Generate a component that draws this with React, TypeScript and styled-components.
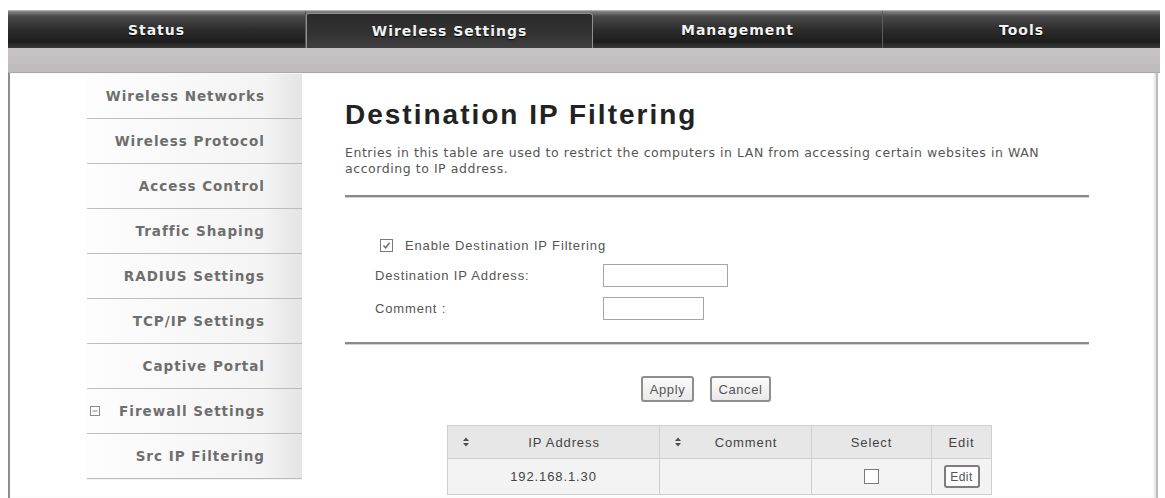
import React, { FC } from 'react';
import styled, { createGlobalStyle, css } from 'styled-components';

const GlobalStyle = createGlobalStyle`
    html, body {
        margin: 0;
        padding: 0;
        background: #ffffff;
    }
    body {
        font-family: 'Liberation Sans', Arial, sans-serif;
        overflow: hidden;
    }
`;

const Page = styled.div`
    width: 1165px;
    height: 498px;
    padding: 10px 0 0 8px;
    box-sizing: border-box;
    display: flex;
    flex-direction: column;
`;

const NavBar = styled.div`
    display: grid;
    grid-template-columns: 298px 287px 290px 1fr;
    height: 38px;
    margin-right: 5px;
    background: linear-gradient(#8a8a8a 0%, #4a4a4a 14%, #2d2d2d 50%, #1d1d1d 84%, #3a3a3a 100%);
    border-top: 1px solid #b0b0b0;
    box-sizing: border-box;
`;

const NavTab = styled.div<{ $active?: boolean }>`
    display: flex;
    align-items: center;
    justify-content: center;
    font-family: 'DejaVu Sans', Verdana, sans-serif;
    font-weight: bold;
    font-size: 14px;
    letter-spacing: 1px;
    color: #f2f2f2;
    text-shadow: 0 1px 1px #000;
    border-right: 1px solid #5c5c5c;

    &:last-child {
        border-right: none;
    }

    ${(props) =>
        props.$active &&
        css`
            background: linear-gradient(#2a2a2a 0%, #333333 60%, #404040 100%);
            border: 1px solid #8f8f8f;
            border-bottom: none;
            border-radius: 3px 3px 0 0;
            margin-top: 2px;
        `}
`;

const SubBar = styled.div`
    height: 24px;
    margin-right: 5px;
    background: linear-gradient(#c6c4c4, #bdbbbb);
    border-bottom: 1px solid #a9a9a9;
`;

const Frame = styled.div`
    flex: 1;
    display: flex;
    margin-right: 7px;
    border-left: 2px solid #8c8c8c;
    border-right: 2px solid #bdbdbd;
    box-shadow: inset -2px 0 2px #e4e4e4;
`;

const Sidebar = styled.nav`
    width: 292px;
    padding: 1px 0 0 77px;
    box-sizing: border-box;
    display: flex;
    flex-direction: column;
`;

const SideItem = styled.div`
    height: 44px;
    display: flex;
    align-items: center;
    justify-content: flex-end;
    gap: 10px;
    padding-right: 37px;
    font-family: 'DejaVu Sans', Verdana, sans-serif;
    font-weight: bold;
    font-size: 13.5px;
    letter-spacing: 1px;
    color: #6e6e6e;
    background: linear-gradient(to right, #fdfdfd 0%, #f4f4f4 82%, #e4e4e4 100%);
    border-bottom: 1px solid #bcbcbc;
    box-shadow: 0 1px 0 #f2f2f2;

    svg {
        margin-right: auto;
        margin-left: 3px;
    }
`;

const Main = styled.main`
    flex: 1;
    padding: 0 67px 0 43px;
    display: flex;
    flex-direction: column;
    color: #444;
`;

const Title = styled.h1`
    margin: 26px 0 0;
    font-family: 'Liberation Sans', Arial, sans-serif;
    font-size: 28px;
    line-height: 32px;
    font-weight: bold;
    letter-spacing: 2px;
    color: #222;
`;

const Description = styled.p`
    margin: 14px 0 0;
    font-family: 'DejaVu Sans', Verdana, sans-serif;
    font-size: 12.5px;
    line-height: 16px;
    letter-spacing: 0.55px;
    color: #555;
`;

const Divider = styled.hr<{ $gap: number }>`
    margin: ${(props) => props.$gap}px 0 0;
    border: none;
    height: 2px;
    background: #8a8a8a;
    box-shadow: 0 1px 1px #cfcfcf;
`;

const Form = styled.div`
    display: flex;
    flex-direction: column;
    padding-left: 30px;
    margin-top: 38px;
    font-size: 13px;
    letter-spacing: 0.85px;
    color: #555;
`;

const CheckRow = styled.label`
    height: 20px;
    display: flex;
    align-items: center;
    gap: 12px;
    padding-left: 5px;
`;

const FieldRow = styled.div`
    height: 23px;
    display: flex;
    align-items: center;
    margin-top: 9px;

    & + & {
        margin-top: 10px;
    }
`;

const FieldLabel = styled.span`
    width: 228px;
`;

const TextInput = styled.input<{ $width: number }>`
    width: ${(props) => props.$width}px;
    height: 23px;
    box-sizing: border-box;
    border: 1px solid #a5a5a5;
    background: #fff;
    padding: 0 3px;
    font-size: 12px;
    outline: none;
`;

const Box = styled.span<{ $size: number }>`
    width: ${(props) => props.$size}px;
    height: ${(props) => props.$size}px;
    box-sizing: border-box;
    border: 1px solid #7a7a7a;
    background: #fff;
    display: inline-flex;
    align-items: center;
    justify-content: center;
`;

const ButtonRow = styled.div`
    display: flex;
    gap: 16px;
    margin-top: 32px;
    padding-left: 296px;
`;

const Button = styled.button<{ $width: number }>`
    width: ${(props) => props.$width}px;
    height: 26px;
    padding: 0;
    border: 2px solid #8e8e8e;
    border-radius: 3px;
    background: linear-gradient(#fbfbfb, #e9e9e9);
    font-family: 'Liberation Sans', Arial, sans-serif;
    font-size: 13px;
    letter-spacing: 0.6px;
    color: #555;
`;

const Table = styled.table`
    margin: 23px 0 0 102px;
    width: 540px;
    border-collapse: collapse;
    font-size: 13px;
    letter-spacing: 0.9px;
    color: #444;
    table-layout: fixed;
`;

const HeadCell = styled.th<{ $width: number }>`
    width: ${(props) => props.$width}px;
    height: 32px;
    padding: 0;
    font-weight: normal;
    background: #e7e7e7;
    border: 1px solid #cfcfcf;
`;

const HeadInner = styled.div<{ $sortable?: boolean }>`
    display: flex;
    align-items: center;
    padding-left: ${(props) => (props.$sortable ? 15 : 0)}px;

    span {
        flex: 1;
        text-align: center;
    }
`;

const Cell = styled.td`
    height: 35px;
    padding: 0;
    text-align: center;
    background: #f3f3f3;
    border: 1px solid #cfcfcf;
`;

const CellCenter = styled.div`
    display: flex;
    align-items: center;
    justify-content: center;
`;

const EditButton = styled.button`
    width: 36px;
    height: 23px;
    padding: 0;
    border: 2px solid #7d7d7d;
    border-radius: 3px;
    background: #fdfdfd;
    font-family: 'Liberation Sans', Arial, sans-serif;
    font-size: 12px;
    letter-spacing: 0.5px;
    color: #555;
`;

const Checkbox: FC<{ checked?: boolean; size?: number }> = ({ checked, size = 13 }) => (
    <Box $size={size}>
        {checked && (
            <svg width="9" height="9" viewBox="0 0 9 9">
                <path d="M1.5 4.5 L3.6 6.8 L7.6 1.8" fill="none" stroke="#6d6d6d" strokeWidth="1.5" />
            </svg>
        )}
    </Box>
);

const SortIcon: FC = () => (
    <svg width="6" height="10" viewBox="0 0 6 10">
        <path d="M0 4 L3 0.5 L6 4 Z M0 6 L3 9.5 L6 6 Z" fill="#4d4d4d" />
    </svg>
);

const CollapseIcon: FC = () => (
    <svg width="10" height="10" viewBox="0 0 10 10">
        <rect x="0.5" y="0.5" width="9" height="9" fill="none" stroke="#8a8a8a" />
        <path d="M2.5 5 H7.5" stroke="#8a8a8a" />
    </svg>
);

const tabs = ['Status', 'Wireless Settings', 'Management', 'Tools'];

const menu = [
    'Wireless Networks',
    'Wireless Protocol',
    'Access Control',
    'Traffic Shaping',
    'RADIUS Settings',
    'TCP/IP Settings',
    'Captive Portal',
    'Firewall Settings',
    'Src IP Filtering',
];

const App: FC = () => (
    <>
        <GlobalStyle />
        <Page>
            <NavBar>
                {tabs.map((tab) => (
                    <NavTab key={tab} $active={tab === 'Wireless Settings'}>
                        {tab}
                    </NavTab>
                ))}
            </NavBar>
            <SubBar />
            <Frame>
                <Sidebar>
                    {menu.map((item) => (
                        <SideItem key={item}>
                            {item === 'Firewall Settings' && <CollapseIcon />}
                            {item}
                        </SideItem>
                    ))}
                </Sidebar>
                <Main>
                    <Title>Destination IP Filtering</Title>
                    <Description>
                        Entries in this table are used to restrict the computers in LAN from accessing certain websites in WAN
                        <br />
                        according to IP address.
                    </Description>
                    <Divider $gap={18} />
                    <Form>
                        <CheckRow>
                            <Checkbox checked />
                            Enable Destination IP Filtering
                        </CheckRow>
                        <FieldRow>
                            <FieldLabel>Destination IP Address:</FieldLabel>
                            <TextInput $width={125} />
                        </FieldRow>
                        <FieldRow>
                            <FieldLabel>Comment :</FieldLabel>
                            <TextInput $width={101} />
                        </FieldRow>
                    </Form>
                    <Divider $gap={22} />
                    <ButtonRow>
                        <Button $width={53}>Apply</Button>
                        <Button $width={61}>Cancel</Button>
                    </ButtonRow>
                    <Table>
                        <thead>
                            <tr>
                                <HeadCell $width={211}>
                                    <HeadInner $sortable>
                                        <SortIcon />
                                        <span>IP Address</span>
                                    </HeadInner>
                                </HeadCell>
                                <HeadCell $width={151}>
                                    <HeadInner $sortable>
                                        <SortIcon />
                                        <span>Comment</span>
                                    </HeadInner>
                                </HeadCell>
                                <HeadCell $width={119}>
                                    <HeadInner>
                                        <span>Select</span>
                                    </HeadInner>
                                </HeadCell>
                                <HeadCell $width={59}>
                                    <HeadInner>
                                        <span>Edit</span>
                                    </HeadInner>
                                </HeadCell>
                            </tr>
                        </thead>
                        <tbody>
                            <tr>
                                <Cell>192.168.1.30</Cell>
                                <Cell></Cell>
                                <Cell>
                                    <CellCenter>
                                        <Checkbox size={15} />
                                    </CellCenter>
                                </Cell>
                                <Cell>
                                    <CellCenter>
                                        <EditButton>Edit</EditButton>
                                    </CellCenter>
                                </Cell>
                            </tr>
                        </tbody>
                    </Table>
                </Main>
            </Frame>
        </Page>
    </>
);

export default App;
